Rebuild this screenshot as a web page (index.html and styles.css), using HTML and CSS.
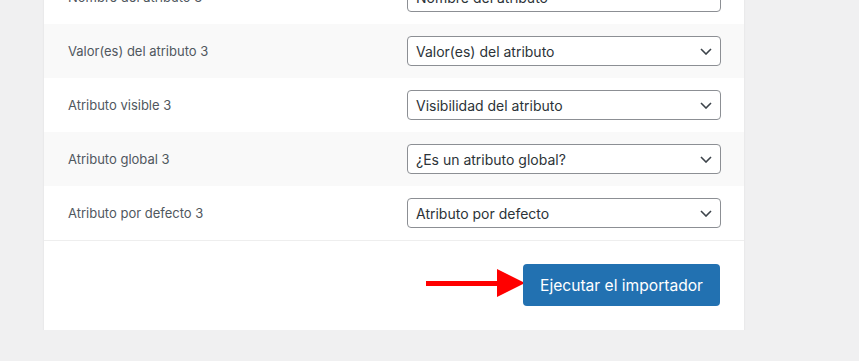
FILE: index.html
```html
<!DOCTYPE html>
<html lang="es">
<head>
<meta charset="utf-8">
<link rel="stylesheet" href="styles.css">
</head>
<body>
<div class="card">
  <div class="rows">
    <div class="row">
      <label class="label">Nombre del atributo 3</label>
      <div class="select"><span>Nombre del atributo</span></div>
    </div>
    <div class="row alt">
      <label class="label">Valor(es) del atributo 3</label>
      <div class="select"><span>Valor(es) del atributo</span><svg class="chev" width="12" height="7" viewBox="0 0 12 7"><path d="M1 1l5 5 5-5" fill="none" stroke="#3c434a" stroke-width="1.6"/></svg></div>
    </div>
    <div class="row">
      <label class="label">Atributo visible 3</label>
      <div class="select"><span>Visibilidad del atributo</span><svg class="chev" width="12" height="7" viewBox="0 0 12 7"><path d="M1 1l5 5 5-5" fill="none" stroke="#3c434a" stroke-width="1.6"/></svg></div>
    </div>
    <div class="row alt">
      <label class="label">Atributo global 3</label>
      <div class="select"><span>¿Es un atributo global?</span><svg class="chev" width="12" height="7" viewBox="0 0 12 7"><path d="M1 1l5 5 5-5" fill="none" stroke="#3c434a" stroke-width="1.6"/></svg></div>
    </div>
    <div class="row">
      <label class="label">Atributo por defecto 3</label>
      <div class="select"><span>Atributo por defecto</span><svg class="chev" width="12" height="7" viewBox="0 0 12 7"><path d="M1 1l5 5 5-5" fill="none" stroke="#3c434a" stroke-width="1.6"/></svg></div>
    </div>
  </div>
  <div class="footer">
    <div class="arrow">
      <span class="shaft"></span>
      <svg width="28" height="28" viewBox="0 0 28 28"><polygon points="0,0 28,14 0,28" fill="#ff0000"/></svg>
    </div>
    <button class="btn">Ejecutar el importador</button>
  </div>
</div>
</body>
</html>
```

FILE: styles.css
```css
html, body {
  margin: 0;
  padding: 0;
  background: #f0f0f1;
  font-family: Inter, "Noto Sans", sans-serif;
}
.card {
  margin: -30px 0 0 44px;
  width: 700px;
  background: #fff;
  box-shadow: 0 1px 2px rgba(0,0,0,0.08);
}
.rows {
  border-bottom: 1px solid #eeeeee;
}
.row {
  height: 54px;
  display: flex;
  align-items: center;
  justify-content: space-between;
  padding: 0 23px 0 24px;
  box-sizing: border-box;
}
.row.alt {
  background: #f9f9f9;
}
.label {
  font-size: 13px;
  color: #50575e;
}
.select {
  width: 314px;
  height: 30px;
  box-sizing: border-box;
  border: 1px solid #8c8f94;
  border-radius: 4px;
  background: #fff;
  display: flex;
  align-items: center;
  justify-content: space-between;
  padding: 0 8px 0 8px;
  font-size: 14px;
  color: #2c3338;
}
.chev {
  display: block;
  margin-top: 1px;
}
.footer {
  display: flex;
  align-items: flex-start;
  justify-content: flex-end;
  padding: 23px 24px 24px 0;
}
.arrow {
  display: flex;
  align-items: center;
  margin-right: -2px;
  margin-top: 5px;
}
.shaft {
  display: block;
  width: 71px;
  height: 5px;
  background: #ff0000;
}
.arrow svg {
  display: block;
}
.btn {
  width: 197px;
  height: 42px;
  border: 0;
  border-radius: 4px;
  background: #2271b1;
  color: #fff;
  font-family: Inter, "Noto Sans", sans-serif;
  font-size: 15.6px;
  padding: 0;
}
```
